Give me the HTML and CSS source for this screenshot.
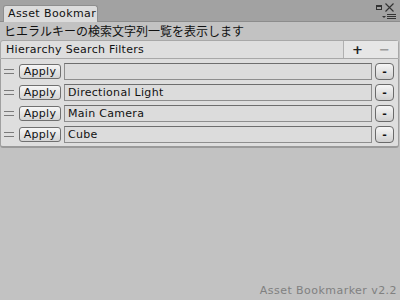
FILE: index.html
```html
<!doctype html>
<html lang="ja">
  <head>
    <meta charset="UTF-8" />
    <title>Asset Bookmarker</title>
    <link rel="stylesheet" href="styles.css">
  </head>
  <body>
    <div id="window">
      <div class="tab-bar">
        <div class="tab">Asset Bookmar</div>
        <div class="win-icons">
          <svg class="icon-max" width="6" height="5" viewBox="0 0 6 5"><rect x="0.5" y="0.5" width="5" height="4" fill="none" stroke="#333"/><rect x="0" y="0" width="6" height="2" fill="#333"/></svg>
          <svg class="icon-close" width="9" height="9" viewBox="0 0 9 9"><path d="M0.5 0.5L8.5 8.5M8.5 0.5L0.5 8.5" stroke="#333" stroke-width="1.1"/></svg>
          <svg class="icon-menu" width="14" height="6" viewBox="0 0 14 6"><path d="M0 2h4L2 4z" fill="#333"/><path d="M5 0.5h9M5 2.5h9M5 4.5h9" stroke="#333" stroke-width="1"/></svg>
        </div>
      </div>

      <div class="content">
        <div class="description">ヒエラルキーの検索文字列一覧を表示します</div>

        <div class="list-header">
          <span class="list-title">Hierarchy Search Filters</span>
          <div class="list-footer-buttons">
            <span class="btn-plus">+</span>
            <span class="btn-minus">&minus;</span>
          </div>
        </div>

        <div class="list-body">
          <div class="row">
            <span class="handle"></span>
            <button class="apply">Apply</button>
            <div class="field"></div>
            <button class="remove">-</button>
          </div>
          <div class="row">
            <span class="handle"></span>
            <button class="apply">Apply</button>
            <div class="field">Directional Light</div>
            <button class="remove">-</button>
          </div>
          <div class="row">
            <span class="handle"></span>
            <button class="apply">Apply</button>
            <div class="field">Main Camera</div>
            <button class="remove">-</button>
          </div>
          <div class="row">
            <span class="handle"></span>
            <button class="apply">Apply</button>
            <div class="field">Cube</div>
            <button class="remove">-</button>
          </div>
        </div>

        <div class="version">Asset Bookmarker v2.2</div>
      </div>
    </div>
  </body>
</html>
```

FILE: styles.css
```css
:root {
  --tabbar-bg: #a2a2a2; --window-bg: #c2c2c2; --panel-bg: #dedede;
  --border: #8a8a8a; --text: #111; --muted: #808080;
}
html, body { margin: 0; padding: 0; width: 400px; height: 300px; overflow: hidden; background: var(--window-bg); color: var(--text); font-family: "DejaVu Sans", "Noto Sans CJK JP", sans-serif; font-size: 11px; }
#window { display: flex; flex-direction: column; height: 300px; }

.tab-bar { height: 21px; background: var(--tabbar-bg); border-bottom: 1px solid #8c8c8c; display: flex; align-items: flex-end; padding-left: 3px; position: relative; }
.tab { height: 16px; width: 89px; padding-left: 4px; background: #dcdcdc; border: 1px solid #8e8e8e; border-bottom: none; border-radius: 3px 3px 0 0; line-height: 16px; font-size: 11px; letter-spacing: 0.4px; overflow: hidden; white-space: nowrap; margin-bottom: -1px; }
.win-icons { position: absolute; right: 0; top: 0; width: 30px; height: 21px; }
.icon-max { position: absolute; left: 6px; top: 5px; }
.icon-close { position: absolute; left: 15px; top: 3px; }
.icon-menu { position: absolute; left: 12px; top: 14px; }

.content { flex: 1; display: flex; flex-direction: column; }
.description { height: 18px; line-height: 18px; padding-left: 4px; font-size: 12px; font-family: "Noto Sans CJK JP", sans-serif; }

.list-header { height: 17px; margin: 0 1px 0 0; background: var(--panel-bg); border: 1px solid #a8a8a8; border-radius: 3px 3px 0 0; display: flex; align-items: center; justify-content: space-between; }
.list-title { padding-left: 5px; font-size: 11px; letter-spacing: 0.3px; }
.list-footer-buttons { align-self: stretch; width: 54px; background: #e6e6e6; border-left: 1px solid #b0b0b0; display: flex; align-items: center; justify-content: space-around; font-size: 13px; font-weight: bold; }
.btn-plus { color: #222; }
.btn-minus { color: #9a9a9a; }

.list-body { margin: 0 1px 0 0; padding: 4px 0 3px 0; background: var(--panel-bg); border: 1px solid #a0a0a0; border-top: none; border-bottom: 2px solid #9a9a9a; border-radius: 0 0 3px 3px; display: flex; flex-direction: column; gap: 4px; }
.row { display: flex; align-items: center; height: 17px; padding-left: 3px; }
.handle { width: 10px; height: 3px; border-top: 1px solid #7a7a7a; border-bottom: 1px solid #7a7a7a; margin-right: 5px; }
.apply { width: 42px; height: 15px; padding: 0; margin: 0 3px 0 0; font-family: inherit; font-size: 11px; letter-spacing: 0.3px; color: #111; background: linear-gradient(#f6f6f6, #d4d4d4); border: 1px solid #707070; border-radius: 3px; line-height: 13px; }
.field { flex: 1; height: 15px; line-height: 15px; padding-left: 3px; font-size: 11px; letter-spacing: 0.3px; background: #dcdcdc; border: 1px solid #8e8e8e; border-top-color: #6e6e6e; white-space: nowrap; overflow: hidden; }
.remove { width: 19px; height: 17px; padding: 0; margin: 0 4px 0 3px; font-family: inherit; font-size: 11px; font-weight: bold; color: #111; background: linear-gradient(#f6f6f6, #d0d0d0); border: 1px solid #6a6a6a; border-radius: 4px; line-height: 13px; }

.version { margin-top: auto; text-align: right; padding: 0 3px 3px 0; color: var(--muted); font-size: 11px; letter-spacing: 0.45px; }
```
